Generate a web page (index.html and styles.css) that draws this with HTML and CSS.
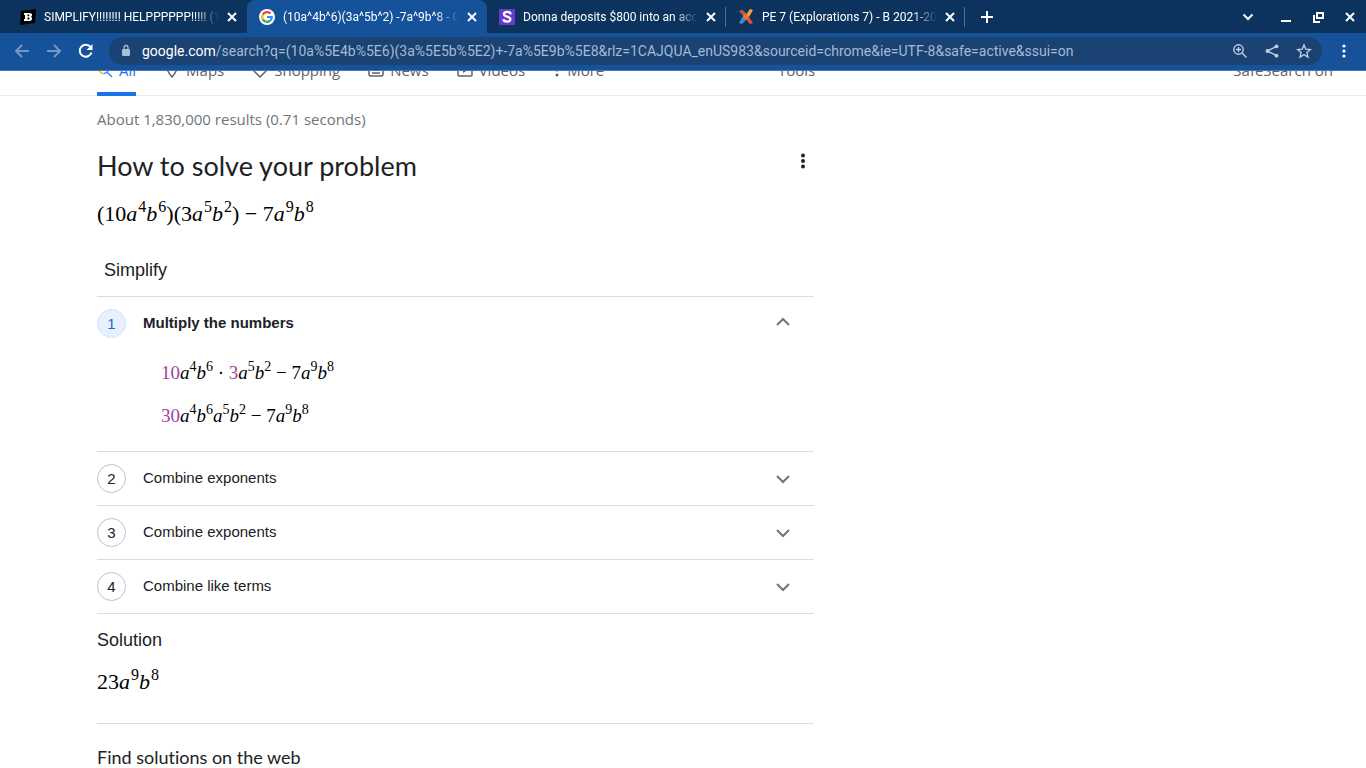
FILE: index.html
```html
<!DOCTYPE html>
<html lang="en">
<head>
<meta charset="utf-8">
<title>(10a^4b^6)(3a^5b^2) -7a^9b^8 - Google Search</title>
<link rel="stylesheet" href="styles.css">
</head>
<body>
<header class="browser">
  <div class="tabstrip">
    <div class="tab">
      <svg class="favicon" viewBox="0 0 16 16"><path d="M1 2 16 0 15 14 0 16z" fill="#000"/><path fill-rule="evenodd" d="M4 4h5.500c3 0 3.300 3 1.300 3.800 2.200.8 1.600 4.200-1.300 4.200H4v-2h1V6H4zM7.500 5.500v1.700h1c1.200 0 1.200-1.700 0-1.700zm0 3v2h1c1.500 0 1.500-2 0-2z" fill="#fff"/></svg>
      <span class="tab-title">SIMPLIFY!!!!!!!! HELPPPPPP!!!!! (10a^4b^6)</span>
      <button class="tab-close" aria-label="Close tab"><svg viewBox="0 0 10 10"><path d="M1 1l8 8M9 1 1 9"/></svg></button>
    </div>
    <div class="tab active">
      <svg class="favicon" viewBox="0 0 16 16"><circle cx="8" cy="8" r="8" fill="#fff"/><g fill="none" stroke-width="2.200"><path d="M3.800 5.600A4.900 4.900 0 0 1 11.600 4.600" stroke="#ea4335"/><path d="M3.800 5.600a4.900 4.900 0 0 0 0 4.800" stroke="#fbbc05"/><path d="M3.800 10.400a4.900 4.900 0 0 0 7.400 1.300" stroke="#34a853"/><path d="M11.200 11.700C12.500 10.500 12.900 9.300 12.800 8H8" stroke="#4285f4"/></g></svg>
      <span class="tab-title">(10a^4b^6)(3a^5b^2) -7a^9b^8 - Google Search</span>
      <button class="tab-close" aria-label="Close tab"><svg viewBox="0 0 10 10"><path d="M1 1l8 8M9 1 1 9"/></svg></button>
    </div>
    <div class="tab ruled">
      <svg class="favicon" viewBox="0 0 16 16"><rect width="16" height="16" rx="1" fill="#673ccb"/><path d="M11.700 5.300C11.200 2 4.700 2.200 4.900 5.300c.2 2.900 6.500 1.900 6.500 5 0 3.300-6.500 3-7 0" fill="none" stroke="#fff" stroke-width="2.300"/></svg>
      <span class="tab-title">Donna deposits $800 into an account</span>
      <button class="tab-close" aria-label="Close tab"><svg viewBox="0 0 10 10"><path d="M1 1l8 8M9 1 1 9"/></svg></button>
    </div>
    <div class="tab ruled">
      <svg class="favicon" viewBox="0 0 16 16"><path d="M3 0l6 5-2 3z" fill="#42b4a2"/><path d="M1 2l3-1 5 5-2 3z" fill="#c9503f"/><path d="M8 6l4-6 3 1-4 7z" fill="#f9a13a"/><path d="M8 6l3 2 4 6-3 1-5-6z" fill="#ef5130"/><path d="M5 7l4 3-5 5-3-1z" fill="#3f8fc4"/><path d="M5 6l4-1 2 3-3 3-2-2z" fill="#f4762c"/></svg>
      <span class="tab-title">PE 7 (Explorations 7) - B 2021-2022</span>
      <button class="tab-close" aria-label="Close tab"><svg viewBox="0 0 10 10"><path d="M1 1l8 8M9 1 1 9"/></svg></button>
    </div>
    <button class="new-tab" aria-label="New tab"><svg viewBox="0 0 12 12"><path d="M6 0v12M0 6h12"/></svg></button>
    <div class="window-controls">
      <button class="tab-search" aria-label="Search tabs"><svg viewBox="0 0 12 12"><path d="M1.500 3.500 6 8l4.500-4.500"/></svg></button>
      <button aria-label="Minimize"><svg viewBox="0 0 12 12"><path d="M1 10h10"/></svg></button>
      <button aria-label="Restore"><svg viewBox="0 0 12 12"><path d="M5 2h6v5H5zM2 4v7h6"/></svg></button>
      <button aria-label="Close"><svg viewBox="0 0 12 12"><path d="M2 2l8 8M10 2l-8 8"/></svg></button>
    </div>
  </div>
  <div class="toolbar">
    <button class="tool dim" aria-label="Back"><svg viewBox="0 0 16 16"><path d="M15 8H2M8 2 2 8l6 6"/></svg></button>
    <button class="tool dim" aria-label="Forward"><svg viewBox="0 0 16 16"><path d="M1 8h13M8 2l6 6-6 6"/></svg></button>
    <button class="tool" aria-label="Reload"><svg viewBox="0 0 16 16"><path d="M13.500 9.500A6 6 0 1 1 12.500 4"/><path d="M14.500 1v6h-6z" class="solid"/></svg></button>
    <div class="omnibox">
      <svg class="lock" viewBox="0 0 10 14"><rect x="1" y="5" width="8" height="7" rx="1" fill="#a9bdd4"/><path d="M3 5V3.500a2 2 0 0 1 4 0V5" fill="none" stroke="#a9bdd4" stroke-width="1.300"/></svg>
      <div class="url"><b>google.com</b>/search?q=(10a%5E4b%5E6)(3a%5E5b%5E2)+-7a%5E9b%5E8&amp;rlz=1CAJQUA_enUS983&amp;sourceid=chrome&amp;ie=UTF-8&amp;safe=active&amp;ssui=on</div>
      <button class="tool pale" aria-label="Zoom"><svg viewBox="0 0 16 16"><circle cx="6.500" cy="6.500" r="4.700"/><path d="M10 10l4.500 4.500M4 6.500h5M6.500 4v5"/></svg></button>
      <button class="tool pale" aria-label="Share"><svg viewBox="0 0 16 16"><path d="M12.500 3.300 3.500 8l9 4.700"/><g class="solid"><circle cx="12.500" cy="3.300" r="1.900"/><circle cx="3.500" cy="8" r="1.900"/><circle cx="12.500" cy="12.700" r="1.900"/></g></svg></button>
      <button class="tool pale" aria-label="Bookmark"><svg viewBox="0 0 16 16"><path d="M8 2l1.800 4.200 4.500.4-3.400 3 1 4.400L8 11.700 4.100 14l1-4.400-3.400-3 4.500-.4z"/></svg></button>
    </div>
    <button class="tool" aria-label="Menu"><svg viewBox="0 0 16 16"><g class="solid"><circle cx="8" cy="3" r="1.600"/><circle cx="8" cy="8" r="1.600"/><circle cx="8" cy="13" r="1.600"/></g></svg></button>
  </div>
</header>
<div class="page">
  <nav class="filters">
    <div class="filter-list">
      <a href="#" class="filter current"><svg viewBox="0 0 16 16"><path d="M10 10l5 5" stroke="#4285f4"/><path d="M1.500 6.500a5 5 0 0 0 5 5" stroke="#fbbc04"/><path d="M6.500 11.500a5 5 0 0 0 5-5" stroke="#4285f4"/><path d="M1.500 6.500a5 5 0 0 1 10 0" stroke="#ea4335"/></svg>All</a>
      <a href="#" class="filter"><svg viewBox="0 0 16 16"><path d="M8 15C5.500 12 3 9 3 6a5 5 0 0 1 10 0c0 3-2.500 6-5 9z"/></svg>Maps</a>
      <a href="#" class="filter"><svg viewBox="0 0 16 16"><path d="M8 1h7v7l-7 7-7-7z"/></svg>Shopping</a>
      <a href="#" class="filter"><svg viewBox="0 0 16 16"><path d="M1 2h14v10q0 2-2 2H3q-2 0-2-2zM4 8h8M4 11h8"/></svg>News</a>
      <a href="#" class="filter"><svg viewBox="0 0 16 16"><rect x="1" y="1" width="14" height="13" rx="1"/><path d="M6 4l5 4-5 3z" fill="#5f6368" stroke="none"/></svg>Videos</a>
      <a href="#" class="filter more"><svg viewBox="0 0 8 16"><g fill="#5f6368" stroke="none"><circle cx="4" cy="3" r="1.500"/><circle cx="4" cy="8" r="1.500"/><circle cx="4" cy="13" r="1.500"/></g></svg>More</a>
    </div>
    <a href="#" class="filter">Tools</a>
    <a href="#" class="filter safe">SafeSearch on</a>
  </nav>
  <main class="results">
    <p class="stats">About 1,830,000 results (0.71 seconds)</p>
    <div class="heading">
      <h1>How to solve your problem</h1>
      <button class="more-options" aria-label="More options"><svg viewBox="0 0 8 16"><circle cx="4" cy="2.500" r="2"/><circle cx="4" cy="8" r="2"/><circle cx="4" cy="13.500" r="2"/></svg></button>
    </div>
    <p class="formula">(10<i>a</i><sup>4</sup><i>b</i><sup>6</sup>)(3<i>a</i><sup>5</sup><i>b</i><sup>2</sup>) − 7<i>a</i><sup>9</sup><i>b</i><sup>8</sup></p>
    <h2 class="method">Simplify</h2>
    <ol class="steps">
      <li class="step open">
        <button class="step-head"><span class="number">1</span><span class="label">Multiply the numbers</span><svg class="chevron" viewBox="0 0 14 14"><path d="M1 8l6-6 6 6"/></svg></button>
        <div class="work">
          <p><em>10</em><i>a</i><sup>4</sup><i>b</i><sup>6</sup> · <em>3</em><i>a</i><sup>5</sup><i>b</i><sup>2</sup> − 7<i>a</i><sup>9</sup><i>b</i><sup>8</sup></p>
          <p><em>30</em><i>a</i><sup>4</sup><i>b</i><sup>6</sup><i>a</i><sup>5</sup><i>b</i><sup>2</sup> − 7<i>a</i><sup>9</sup><i>b</i><sup>8</sup></p>
        </div>
      </li>
      <li class="step"><button class="step-head"><span class="number">2</span><span class="label">Combine exponents</span><svg class="chevron" viewBox="0 0 14 14"><path d="M1 4l6 6 6-6"/></svg></button></li>
      <li class="step"><button class="step-head"><span class="number">3</span><span class="label">Combine exponents</span><svg class="chevron" viewBox="0 0 14 14"><path d="M1 4l6 6 6-6"/></svg></button></li>
      <li class="step"><button class="step-head"><span class="number">4</span><span class="label">Combine like terms</span><svg class="chevron" viewBox="0 0 14 14"><path d="M1 4l6 6 6-6"/></svg></button></li>
    </ol>
    <section class="solution">
      <h2>Solution</h2>
      <p class="formula">23<i>a</i><sup>9</sup><i>b</i><sup>8</sup></p>
    </section>
    <h2 class="web">Find solutions on the web</h2>
  </main>
</div>
</body>
</html>
```
FILE: styles.css
```css
* { box-sizing: border-box; }
body {
  margin: 0;
  height: 100vh;
  display: flex;
  flex-direction: column;
  overflow: hidden;
  background: #fff;
  color: #202124;
  font-family: "Liberation Sans", Arial, sans-serif;
}
h1, h2, p, ol { margin: 0; padding: 0; font-weight: 400; }
button { border: 0; padding: 0; background: none; color: inherit; font: inherit; display: flex; align-items: center; justify-content: center; }
svg { flex: none; }

.browser { flex: none; font-family: Roboto, sans-serif; color: #fff; border-bottom: 1px solid #4479b3; }
.browser button svg { fill: none; stroke: currentColor; stroke-width: 2; }
.tabstrip { display: flex; height: 33px; padding-left: 8px; background: #0b335e; }
.tab { display: flex; align-items: center; flex: 0 1 239px; min-width: 0; padding: 0 9px 0 12px; font-size: 12px; }
.tab.ruled { background: linear-gradient(#47729f, #47729f) right center / 1px 20px no-repeat; }
.tab.active { flex-basis: 240px; background: #15529a; border-radius: 8px 8px 0 0; }
.favicon { width: 16px; height: 16px; }
.tab-title {
  flex: 1;
  min-width: 0;
  margin: 0 7px 0 8px;
  overflow: hidden;
  white-space: nowrap;
  -webkit-mask-image: linear-gradient(to right, #000 86%, transparent);
  mask-image: linear-gradient(to right, #000 86%, transparent);
}
.tab-close { flex: none; width: 12px; height: 16px; }
.tab-close svg { width: 10px; height: 10px; }
.new-tab { width: 44px; }
.new-tab svg { width: 12px; height: 12px; }
.window-controls { display: flex; align-items: center; margin-left: auto; }
.window-controls button { width: 32px; height: 32px; }
.window-controls .tab-search { width: 44px; }
.window-controls svg { width: 12px; height: 12px; }

.toolbar { display: flex; align-items: center; height: 37px; padding: 0 6px 1px; background: #15529a; }
.tool { flex: none; width: 32px; height: 28px; }
.tool svg { width: 16px; height: 16px; }
.tool .solid { fill: currentColor; stroke: none; }
.tool.dim { color: #7398c4; }
.tool.pale { color: #c1d0e2; }
.browser .tool.pale svg { stroke-width: 1.400; }
.omnibox {
  flex: 1;
  min-width: 0;
  display: flex;
  align-items: center;
  height: 28px;
  margin: 0 6px 0 7px;
  padding: 0 2px 0 12px;
  border-radius: 14px;
  background: #1a4272;
}
.lock { width: 10px; height: 14px; }
.url { flex: 1; min-width: 0; margin-left: 11px; overflow: hidden; white-space: nowrap; font-size: 14px; color: #a3bbd6; }
.url b { font-weight: 400; color: #fff; }

.page { flex: 1; min-height: 0; overflow: hidden; }
.filters {
  display: flex;
  align-items: flex-end;
  height: 25px;
  padding: 0 33px 0 97px;
  overflow: hidden;
  box-shadow: inset 0 -1px #e8eaed;
  font-family: "Open Sans", sans-serif;
  font-size: 15px;
}
.filter-list { display: flex; gap: 28px; width: 681px; }
.filter { display: flex; gap: 6px; height: 46px; padding-top: 10px; line-height: 20px; color: #5f6368; text-decoration: none; white-space: nowrap; }
.filter svg { width: 16px; height: 16px; margin-top: 2px; fill: none; stroke: #5f6368; stroke-width: 1.500; }
.filter.more svg { width: 8px; }
.filter.current { color: #1a73e8; border-bottom: 4px solid #1a73e8; }
.filter.safe { margin-left: auto; }

.results { max-width: 814px; padding-left: 97px; }
.stats { padding-top: 12px; line-height: 22px; font-family: "Open Sans", sans-serif; font-size: 15px; color: #70757a; }
.heading { display: flex; justify-content: space-between; margin-top: 18px; }
.heading h1 { font-family: Lato, sans-serif; font-size: 27px; line-height: 36px; }
.more-options { width: 22px; height: 26px; }
.more-options svg { width: 8px; height: 16px; fill: #202124; }
.formula, .work { font-family: "Liberation Serif", serif; color: #000; white-space: nowrap; }
.formula { font-size: 22px; line-height: 32px; margin-top: 14px; }
sup { margin-left: 1px; font-size: 16px; line-height: 0; vertical-align: 9px; }
.work sup { margin-left: 0; font-size: 14px; vertical-align: 8px; }
.method { margin-top: 28px; padding-left: 7px; font-size: 18px; line-height: 24px; }
.steps { list-style: none; margin-top: 14px; border-top: 1px solid #dadce0; }
.step { border-bottom: 1px solid #dadce0; }
.step-head { width: 100%; height: 53px; padding-right: 24px; font-size: 15px; text-align: left; }
.number { width: 29px; height: 29px; border: 1px solid #bdc1c6; border-radius: 50%; line-height: 28px; text-align: center; }
.label { flex: 1; margin-left: 17px; padding-bottom: 2px; }
.chevron { width: 14px; height: 14px; fill: none; stroke: #70757a; stroke-width: 2; }
.open .label { font-weight: 700; }
.open .number { border-color: #d2e3fc; background: #e8f0fe; color: #1967d2; }
.work { padding: 7px 0 8px 64px; font-size: 19px; }
.work p { line-height: 32px; margin-bottom: 11px; }
.work em { font-style: normal; color: #a142a4; }
.solution { padding: 14px 0 25px; border-bottom: 1px solid #dadce0; }
.solution h2 { font-size: 18px; line-height: 24px; }
.web { padding-top: 21px; font-family: Lato, sans-serif; font-size: 18px; line-height: 24px; font-variant-ligatures: none; }
```
